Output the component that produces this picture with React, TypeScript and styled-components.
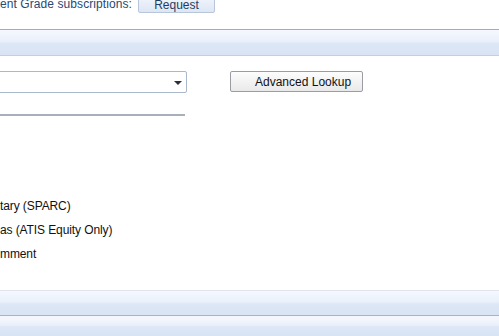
import React from "react";
import styled, { createGlobalStyle } from "styled-components";

const Global = createGlobalStyle`
  html, body { margin: 0; padding: 0; background: #ffffff; overflow: hidden; }
  body { font-family: "Liberation Sans", Arial, sans-serif; font-size: 12px; color: #000; }
`;

const Page = styled.div`
  width: 499px;
  height: 336px;
  overflow: hidden;
  display: flex;
  flex-direction: column;
`;

const TopRow = styled.div`
  display: flex;
  align-items: center;
  height: 17px;
  margin-top: -4px;
  margin-bottom: 16px;
  gap: 6px;
`;

const TopLabel = styled.span`
  color: #284a72;
  font-size: 12px;
  line-height: 14px;
  margin-top: -2px;
  letter-spacing: 0.08px;
`;

const SmallButton = styled.button`
  box-sizing: border-box;
  width: 77px;
  height: 17px;
  border: 1px solid #b7c6da;
  border-radius: 2px;
  background: linear-gradient(#f1f5fc, #dde6f4);
  color: #1f3c63;
  font-family: "Liberation Sans", Arial, sans-serif;
  font-size: 12px;
  padding: 0;
  line-height: 14px;
`;

const SectionBar = styled.div<{ $top: string; $bottom: string; $h: number }>`
  box-sizing: border-box;
  height: ${(p) => p.$h}px;
  border-top: 1px solid ${(p) => p.$top};
  border-bottom: 1px solid ${(p) => p.$bottom};
  background: linear-gradient(
    #f5f8fe 0%,
    #eaf0fa 46%,
    #dde7f6 54%,
    #d8e3f4 100%
  );
  flex-shrink: 0;
`;

const FormRow = styled.div`
  display: flex;
  align-items: flex-start;
  margin-top: 15px;
  height: 22px;
`;

const Select = styled.div`
  box-sizing: border-box;
  margin-left: -20px;
  width: 207px;
  height: 22px;
  border: 1px solid #a9b8cb;
  border-radius: 2px;
  background: #fff;
  display: flex;
  align-items: center;
  justify-content: flex-end;
  padding-right: 4px;
`;

const Arrow = styled.span`
  width: 0;
  height: 0;
  border-left: 4px solid transparent;
  border-right: 4px solid transparent;
  border-top: 4px solid #2b2f36;
  margin-top: 1px;
`;

const LookupButton = styled.button`
  box-sizing: border-box;
  margin-left: 43px;
  width: 133px;
  height: 21px;
  border: 1px solid #9a9ea4;
  border-radius: 2px;
  background: linear-gradient(#fdfdfd, #e9e9e9);
  font-family: "Liberation Sans", Arial, sans-serif;
  font-size: 12px;
  color: #111;
  text-align: left;
  padding: 0 0 0 24px;
`;

const Underline = styled.div`
  width: 185px;
  height: 2px;
  background: #a8b0bb;
  margin-top: 21px;
`;

const OptionList = styled.div`
  display: flex;
  flex-direction: column;
  margin-top: 78px;
`;

const OptionText = styled.div`
  height: 24px;
  line-height: 24px;
  font-size: 12px;
  color: #111;
  white-space: nowrap;
  letter-spacing: -0.1px;
`;

const Spacer = styled.div`
  height: 26px;
`;

const options = ["tary (SPARC)", "as (ATIS Equity Only)", "mment"];

export default function App() {
  return (
    <Page>
      <Global />
      <TopRow>
        <TopLabel>ent Grade subscriptions:</TopLabel>
        <SmallButton>Request</SmallButton>
      </TopRow>
      <SectionBar $top="#a7acb3" $bottom="#c6cfdc" $h={27} />
      <FormRow>
        <Select>
          <Arrow />
        </Select>
        <LookupButton>Advanced Lookup</LookupButton>
      </FormRow>
      <Underline />
      <OptionList>
        {options.map((o) => (
          <OptionText key={o}>{o}</OptionText>
        ))}
      </OptionList>
      <Spacer />
      <SectionBar $top="#e1e5eb" $bottom="#a9b5c6" $h={26} />
      <SectionBar $top="#f3f6fb" $bottom="#d8e3f4" $h={20} />
    </Page>
  );
}
